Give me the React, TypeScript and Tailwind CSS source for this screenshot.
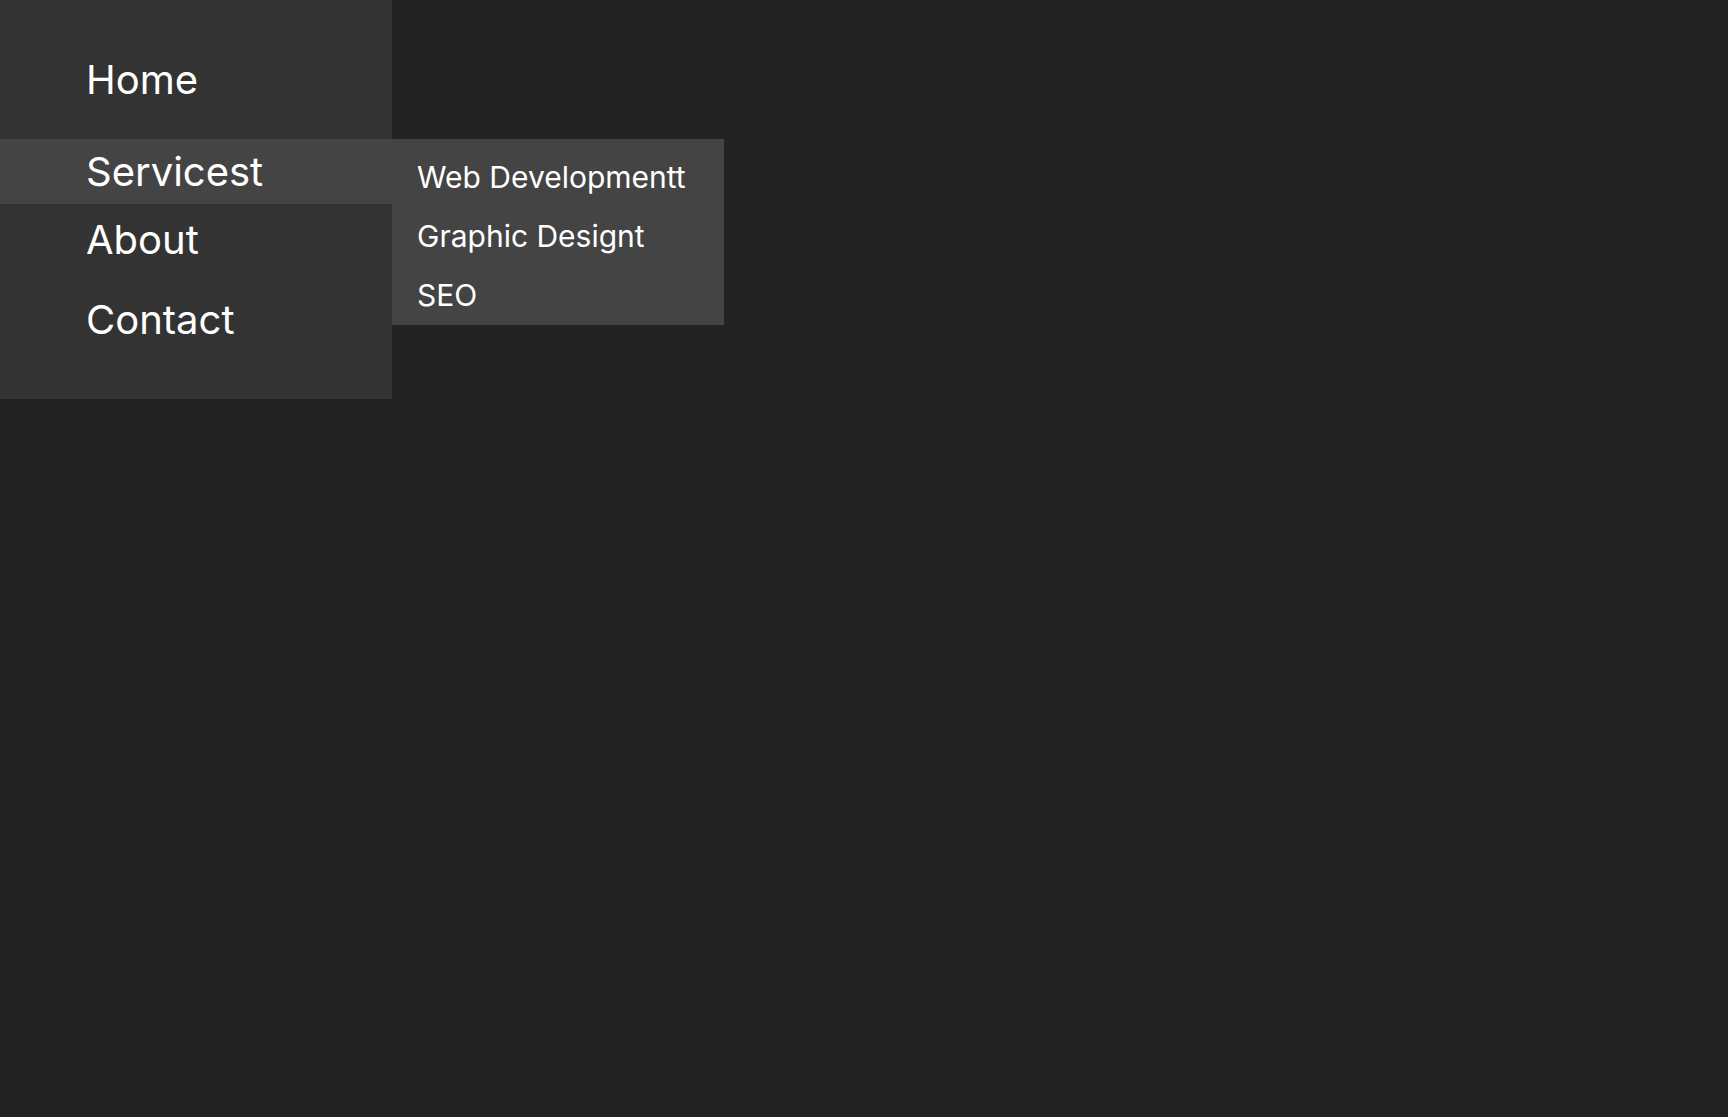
import React from 'react';

const subItems = ['Web Developmentt', 'Graphic Designt', 'SEO'];

export default function App() {
  return (
    <div className="min-h-screen w-full bg-[#222222] text-white font-['Inter','Noto_Sans',sans-serif]">
      <nav className="w-[392px] bg-[#333333] pt-[56px] pb-[55px]">
        <ul className="flex flex-col text-[40px] leading-[48px]">
          <li className="px-[86px]">Home</li>
          <li className="relative mt-[35px] bg-[#444444] px-[86px] pt-[9px] pb-[8px]">
            Servicest
            <ul className="absolute left-[392px] top-0 w-[332px] bg-[#444444] pl-[25px] pt-[9px] text-[30px] leading-[59px]">
              {subItems.map((item) => (
                <li key={item}>{item}</li>
              ))}
            </ul>
          </li>
          <li className="mt-[12px] px-[86px]">About</li>
          <li className="mt-[32px] px-[86px]">Contact</li>
        </ul>
      </nav>
    </div>
  );
}
